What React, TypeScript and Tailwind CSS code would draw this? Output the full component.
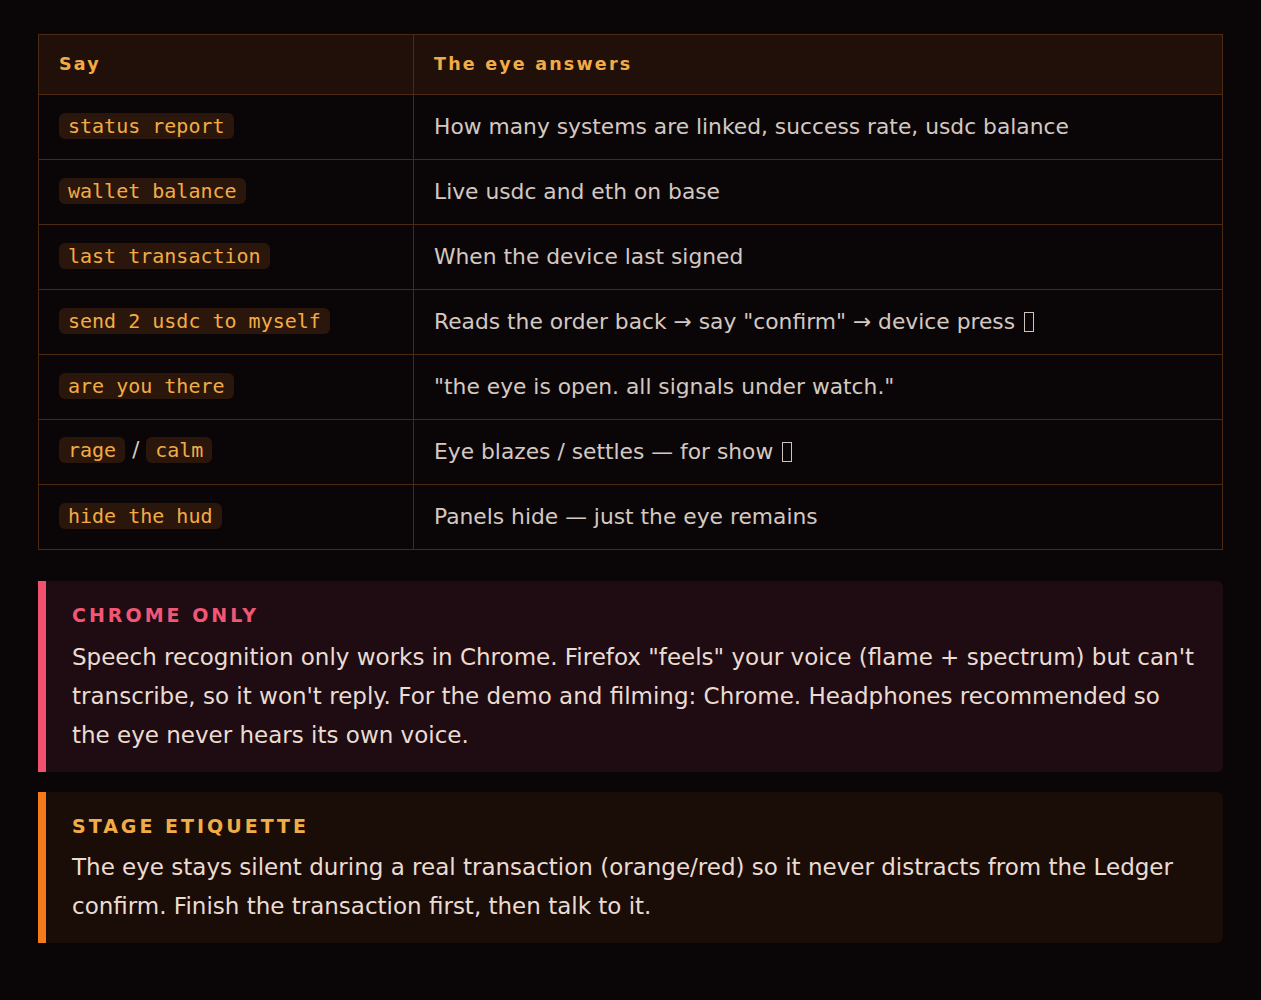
import React from 'react';

const ROWS: { say: string[]; answer: React.ReactNode }[] = [
  { say: ['status report'], answer: 'How many systems are linked, success rate, usdc balance' },
  { say: ['wallet balance'], answer: 'Live usdc and eth on base' },
  { say: ['last transaction'], answer: 'When the device last signed' },
  { say: ['send 2 usdc to myself'], answer: <>Reads the order back → say "confirm" → device press <Tofu /></> },
  { say: ['are you there'], answer: '"the eye is open. all signals under watch."' },
  { say: ['rage', 'calm'], answer: <>Eye blazes / settles — for show <Tofu /></> },
  { say: ['hide the hud'], answer: 'Panels hide — just the eye remains' },
];

// missing-glyph box, as the browser drew it
function Tofu() {
  return <span className="inline-block w-[10px] h-[20px] border border-[#cfc3bb] align-[-3px] ml-[2px]" />;
}

function Code({ children }: { children: string }) {
  return (
    <code className="bg-[#2a160b] text-[#f2ac45] rounded-[6px] px-[9px] py-[1px] text-[20px] font-['DejaVu_Sans_Mono',monospace]">
      {children}
    </code>
  );
}

const heading = "font-['DejaVu_Sans',sans-serif] font-bold";

const App: React.FC = () => {
  return (
    <div className="min-h-[1000px] bg-[#0a0608] px-[38px] pt-[34px] pb-10 font-['DejaVu_Sans',sans-serif]">
      <table className="w-full border-collapse border border-[#4a2a12]">
        <thead>
          <tr className="bg-[#211009]">
            <th className={`w-[375px] h-[60px] border border-[#4a2a12] px-5 text-left text-[17.5px] text-[#f2ac45] tracking-[2.2px] ${heading}`}>Say</th>
            <th className={`h-[60px] border border-[#4a2a12] px-5 text-left text-[17.5px] text-[#f2ac45] tracking-[2.2px] ${heading}`}>The eye answers</th>
          </tr>
        </thead>
        <tbody>
          {ROWS.map((r, i) => (
            <tr key={i} className="h-[65px]">
              <td className="border border-[#4a2a12] px-5 pb-[2px] text-[#d8ccc4]">
                {r.say.map((s, j) => (
                  <React.Fragment key={s}>
                    {j > 0 && <span className="text-[21px] mx-[7px]">/</span>}
                    <Code>{s}</Code>
                  </React.Fragment>
                ))}
              </td>
              <td className="border border-[#4a2a12] px-5 text-[21.8px] text-[#d4c8c0]">{r.answer}</td>
            </tr>
          ))}
        </tbody>
      </table>

      <div className="mt-[31px] flex flex-col gap-5">
        <div className="bg-[#1e0c12] border-l-[8px] border-[#f2506f] rounded-r-[6px] pl-[26px] pr-6 pt-[20px] pb-[17px]">
          <div className={`text-[19px] tracking-[3px] text-[#f25675] ${heading}`}>CHROME ONLY</div>
          <p className="mt-[8px] text-[23px] leading-[39px] text-[#ebdcd2]">
            Speech recognition only works in Chrome. Firefox "feels" your voice (flame + spectrum) but can't transcribe, so it won't reply. For the demo and filming: Chrome. Headphones recommended so the eye never hears its own voice.
          </p>
        </div>
        <div className="bg-[#1a0d08] border-l-[8px] border-[#f57a1c] rounded-r-[6px] pl-[26px] pr-6 pt-[20px] pb-[17px]">
          <div className={`text-[19px] tracking-[3px] text-[#f2ac45] ${heading}`}>STAGE ETIQUETTE</div>
          <p className="mt-[8px] text-[23px] leading-[39px] text-[#ebdcd2]">
            The eye stays silent during a real transaction (orange/red) so it never distracts from the Ledger confirm. Finish the transaction first, then talk to it.
          </p>
        </div>
      </div>
    </div>
  );
};

export default App;
